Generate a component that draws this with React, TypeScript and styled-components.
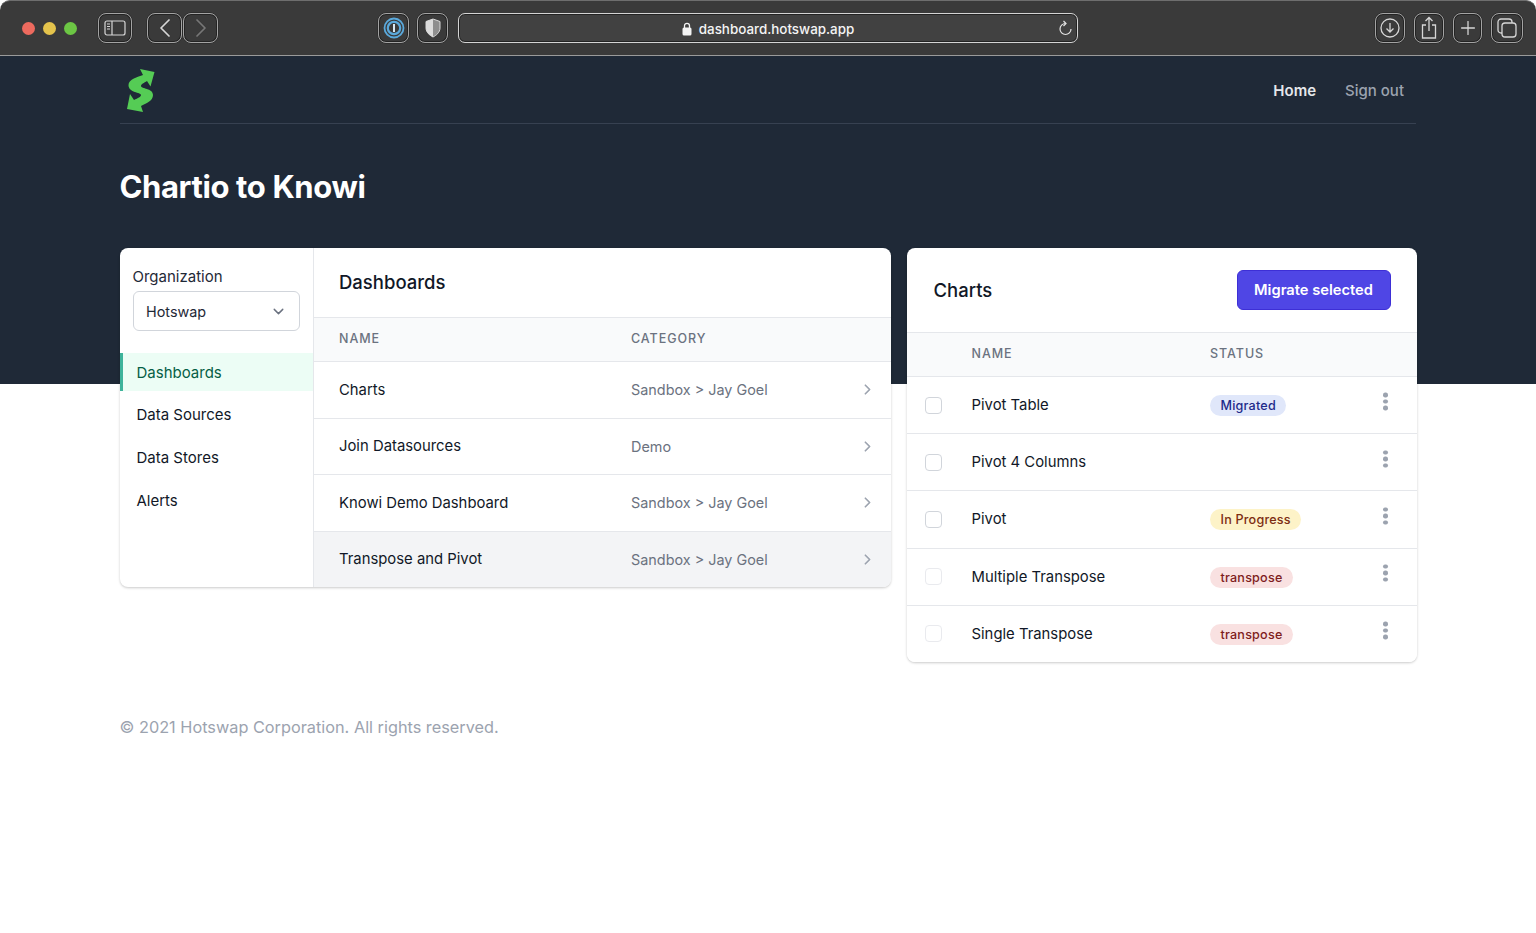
import { ChevronDown, ChevronLeft, ChevronRight, Plus } from "lucide-react";
import styled, { createGlobalStyle } from "styled-components";

const dashboards = [
  { name: "Charts", category: "Sandbox > Jay Goel" },
  { name: "Join Datasources", category: "Demo" },
  { name: "Knowi Demo Dashboard", category: "Sandbox > Jay Goel" },
  { name: "Transpose and Pivot", category: "Sandbox > Jay Goel", active: true },
];

type Tone = "blue" | "yellow" | "red";

const charts: { name: string; status?: string; tone?: Tone; faded?: boolean }[] = [
  { name: "Pivot Table", status: "Migrated", tone: "blue" },
  { name: "Pivot 4 Columns" },
  { name: "Pivot", status: "In Progress", tone: "yellow" },
  { name: "Multiple Transpose", status: "transpose", tone: "red", faded: true },
  { name: "Single Transpose", status: "transpose", tone: "red", faded: true },
];

const navItems = ["Dashboards", "Data Sources", "Data Stores", "Alerts"];

const toneColors: Record<Tone, { bg: string; fg: string }> = {
  blue: { bg: "#e0e7fa", fg: "#1e2a8a" },
  yellow: { bg: "#fdf3c8", fg: "#7c2d12" },
  red: { bg: "#f9e1e1", fg: "#7f1d1d" },
};

const GlobalStyle = createGlobalStyle`
  html, body {
    margin: 0;
    background: #fff;
    font-family: Inter, "Liberation Sans", sans-serif;
    color: #111827;
  }
  * { box-sizing: border-box; }
`;

const Toolbar = styled.div`
  height: 56px;
  background: #3a3a3a;
  border-radius: 10px 10px 0 0;
  border-top: 1px solid #6e6e6e;
  border-bottom: 1px solid #9a9a9a;
  display: flex;
  align-items: center;
  padding: 0 13px 0 22px;
`;

const Light = styled.span<{ $color: string }>`
  width: 13px;
  height: 13px;
  border-radius: 50%;
  background: ${(p) => p.$color};
  margin-right: 8px;
`;

const ToolButton = styled.div<{ $width: number; $left?: number }>`
  width: ${(p) => p.$width}px;
  height: 30px;
  margin-left: ${(p) => p.$left ?? 0}px;
  border: 1px solid #a3a3a3;
  border-radius: 8px;
  box-shadow: inset 0 0 0 1px #232323, 0 0 0 0.5px #232323;
  display: flex;
  align-items: center;
  justify-content: center;
  flex: none;
  color: #d6d6d6;
`;

const UrlBar = styled.div`
  width: 620px;
  height: 30px;
  margin-left: 10px;
  padding-top: 1px;
  flex: none;
  border: 1px solid #d4d4d4;
  border-radius: 7px;
  box-shadow: inset 0 0 0 1px #232323;
  background: #414141;
  display: flex;
  align-items: center;
  justify-content: center;
  gap: 7px;
  position: relative;
  color: #f4f4f4;
  font-size: 13.4px;
  font-weight: 500;
`;

const Reload = styled.span`
  position: absolute;
  right: 4px;
  top: 6px;
  display: flex;
  color: #e4e4e4;
`;

const Hero = styled.header`
  height: 328px;
  background: #1f2937;
  padding: 0 120px;
`;

const TopNav = styled.nav`
  height: 68px;
  border-bottom: 1px solid #374151;
  display: flex;
  align-items: center;
  justify-content: space-between;
  padding: 0 12px 0 6px;
`;

const NavLinks = styled.div`
  display: flex;
  gap: 29px;
  padding-top: 2px;
`;

const NavLink = styled.a<{ $active?: boolean }>`
  font-size: 15px;
  font-weight: ${(p) => (p.$active ? 600 : 500)};
  color: ${(p) => (p.$active ? "#e5e7eb" : "#9ca3af")};
`;

const Title = styled.h1`
  margin: 44px 0 0 -0.5px;
  font-size: 31px;
  line-height: 38px;
  font-weight: 700;
  letter-spacing: -0.37px;
  color: #fff;
`;

const Main = styled.main`
  margin-top: -136px;
  padding: 0 119px 0 119.5px;
  display: flex;
  gap: 16px;
  align-items: flex-start;
`;

const Card = styled.section<{ $width: number }>`
  width: ${(p) => p.$width}px;
  flex: none;
  background: #fff;
  border-radius: 8px;
  overflow: hidden;
  box-shadow: 0 1px 3px rgba(0, 0, 0, 0.14), 0 1px 2px rgba(0, 0, 0, 0.08);
`;

const Split = styled.div`
  display: flex;
`;

const Sidebar = styled.aside`
  width: 194px;
  flex: none;
  border-right: 1px solid #e5e7eb;
  padding-top: 18.5px;
`;

const FieldLabel = styled.label`
  display: block;
  padding-left: 13px;
  font-size: 15px;
  line-height: 20px;
  color: #1f2937;
`;

const Select = styled.div`
  margin: 4.5px 13px 22px;
  height: 40px;
  border: 1px solid #d1d5db;
  border-radius: 6px;
  padding: 0 12px 0 12.5px;
  display: flex;
  align-items: center;
  justify-content: space-between;
  font-size: 14.4px;
  color: #1f2937;
`;

const SideNav = styled.ul`
  list-style: none;
  margin: 0;
  padding: 0 0 68px;
  display: flex;
  flex-direction: column;
  gap: 4.7px;
`;

const SideItem = styled.li<{ $active?: boolean }>`
  height: 38px;
  display: flex;
  align-items: center;
  padding-left: 14px;
  font-size: 15px;
  color: ${(p) => (p.$active ? "#065f46" : "#111827")};
  background: ${(p) => (p.$active ? "#ecfdf5" : "transparent")};
  border-left: 3.5px solid ${(p) => (p.$active ? "#3eb39b" : "transparent")};
`;

const Content = styled.div`
  flex: 1;
  min-width: 0;
`;

const PanelHead = styled.div<{ $height: number; $left: number; $nudge?: number }>`
  height: ${(p) => p.$height}px;
  padding: 0 26px ${(p) => p.$nudge ?? 0}px ${(p) => p.$left}px;
  display: flex;
  align-items: center;
  justify-content: space-between;
`;

const PanelTitle = styled.h2`
  margin: 0;
  font-size: 18.5px;
  font-weight: 500;
  color: #111827;
`;

const DashGrid = styled.div<{ $active?: boolean; $head?: boolean }>`
  display: grid;
  grid-template-columns: 292px 1fr 24px;
  align-items: center;
  padding: 0 12px ${(p) => (p.$head ? 1.5 : 0)}px 25.5px;
  height: ${(p) => (p.$head ? 44 : 56.5)}px;
  border-top: 1px solid #e5e7eb;
  background: ${(p) => (p.$active ? "#f3f4f6" : p.$head ? "#f9fafb" : "#fff")};
`;

const ChartGrid = styled.div<{ $head?: boolean }>`
  display: grid;
  grid-template-columns: 64.5px 238.5px 1fr 24px;
  align-items: center;
  padding: 0 19.5px ${(p) => (p.$head ? 2 : 0)}px 0;
  height: ${(p) => (p.$head ? 44 : 57.2)}px;
  border-top: 1px solid #e5e7eb;
  background: ${(p) => (p.$head ? "#f9fafb" : "#fff")};
`;

const ColHead = styled.span`
  font-size: 12.5px;
  font-weight: 500;
  letter-spacing: 0.95px;
  text-transform: uppercase;
  color: #6b7280;
`;

const Name = styled.span`
  font-size: 14.85px;
  font-weight: 400;
  color: #111827;
`;

const Category = styled.span`
  font-size: 14.4px;
  color: #6b7280;
`;

const RowChevron = styled.span`
  display: flex;
  justify-content: center;
  color: #9ca3af;
`;

const CheckCell = styled.span`
  display: flex;
  justify-content: flex-end;
  padding-right: 30px;
`;

const CheckBox = styled.span<{ $faded?: boolean }>`
  width: 17px;
  height: 17px;
  border-radius: 4px;
  border: 1px solid ${(p) => (p.$faded ? "#e9eaee" : "#d1d5db")};
  background: #fff;
`;

const Badge = styled.span<{ $tone: Tone }>`
  display: inline-flex;
  align-items: center;
  height: 21px;
  padding: 0 10.5px;
  border-radius: 11px;
  font-size: 12.6px;
  font-weight: 500;
  letter-spacing: 0.2px;
  background: ${(p) => toneColors[p.$tone].bg};
  color: ${(p) => toneColors[p.$tone].fg};
`;

const Kebab = styled.span`
  display: flex;
  flex-direction: column;
  align-items: center;
  gap: 2px;
  transform: translateY(-3.5px);
  i {
    width: 4.5px;
    height: 4.5px;
    border-radius: 50%;
    background: #9ca3af;
  }
`;

const PrimaryButton = styled.button`
  width: 154px;
  height: 40px;
  padding: 0 6px 0 5px;
  border: 1px solid #3d2fd6;
  border-radius: 6px;
  background: #4f46e5;
  color: #fff;
  font-family: inherit;
  font-size: 14.7px;
  font-weight: 600;
`;

const Footer = styled.footer`
  margin-top: 53px;
  padding-left: 119.5px;
  font-size: 16.3px;
  line-height: 24px;
  color: #9ca3af;
`;

const Logo = () => (
  <svg width="30" height="46" viewBox="126 66 30 46">
    <path
      d="M140 68 L154.5 71 L150.5 85.5 L147 80 C144 82 141 83 141 85 C141 88 153 87 153 94 C153 100 146 102.5 141 105 L143 111 L127 108 L130 93 L134 99 C138 97 141 96 141 94 C141 91 128.5 92 128.5 84 C128.5 78 138 76 143 74 Z"
      fill="#55cc55"
    />
  </svg>
);

const SidebarIcon = () => (
  <svg width="22" height="18" viewBox="0 0 22 18" fill="none" stroke="currentColor" strokeWidth="1.2">
    <rect x="1" y="2" width="20" height="14" rx="2" />
    <path d="M8 2v14M3 5h3M3 7.5h3M3 10h3" />
  </svg>
);

const OnePassword = () => (
  <svg width="22" height="22" viewBox="0 0 22 22" fill="none">
    <circle cx="11" cy="11" r="9.5" stroke="#5aa9dc" strokeWidth="1.8" />
    <circle cx="11" cy="11" r="6.2" stroke="#5aa9dc" strokeWidth="2.2" />
    <path d="M11 7v8" stroke="#d9e9f4" strokeWidth="2" />
  </svg>
);

const Shield = () => (
  <svg width="16" height="20" viewBox="0 0 16 20">
    <path d="M8 1 L15 3.5 V10 C15 14.5 11 17.5 8 19 C5 17.5 1 14.5 1 10 V3.5 Z" fill="#8e8e8e" stroke="#d8d8d8" />
    <path d="M8 1 L1 3.5 V10 C1 14.5 5 17.5 8 19 Z" fill="#dcdcdc" />
  </svg>
);

const LockIcon = () => (
  <svg width="10" height="14" viewBox="0 0 10 14">
    <path d="M2.5 6V3.8a2.5 2.5 0 0 1 5 0V6" fill="none" stroke="#f4f4f4" strokeWidth="1.3" />
    <rect x="0.5" y="5.5" width="9" height="8" rx="1.5" fill="#f4f4f4" />
  </svg>
);

const ReloadIcon = () => (
  <svg width="15" height="16" viewBox="0 0 15 16" fill="none" stroke="currentColor" strokeWidth="1.2">
    <path d="M7.5 3.5A5.5 5.5 0 1 0 13 9" />
    <path d="M5.5 1 8 3.5 5.5 6" />
  </svg>
);

const DownloadIcon = () => (
  <svg width="22" height="22" viewBox="0 0 22 22" fill="none" stroke="currentColor" strokeWidth="1.3">
    <circle cx="11" cy="11" r="9" />
    <path d="M11 6v9M7.5 11.5 11 15l3.5-3.5" />
  </svg>
);

const ShareIcon = () => (
  <svg width="18" height="24" viewBox="0 0 18 24" fill="none" stroke="currentColor" strokeWidth="1.3">
    <path d="M6 9H2.5v13h13V9H12M9 15V2M5.5 5 9 1.5 12.5 5" />
  </svg>
);

const TabsIcon = () => (
  <svg width="22" height="22" viewBox="0 0 22 22" fill="none" stroke="currentColor" strokeWidth="1.3">
    <rect x="6" y="6" width="14" height="14" rx="3" />
    <path d="M6 16H5a3 3 0 0 1-3-3V5a3 3 0 0 1 3-3h8a3 3 0 0 1 3 3v1" />
  </svg>
);

const App = () => {
  return (
    <>
      <GlobalStyle />
      <Toolbar>
        <Light $color="#ed6a5e" />
        <Light $color="#e4c34c" />
        <Light $color="#6cc644" />
        <ToolButton $width={34} $left={13}>
          <SidebarIcon />
        </ToolButton>
        <ToolButton $width={35} $left={15}>
          <ChevronLeft size={32} strokeWidth={1.3} />
        </ToolButton>
        <ToolButton $width={35} $left={1}>
          <ChevronRight size={32} strokeWidth={1.3} color="#777" />
        </ToolButton>
        <ToolButton $width={31} $left={160}>
          <OnePassword />
        </ToolButton>
        <ToolButton $width={31} $left={8}>
          <Shield />
        </ToolButton>
        <UrlBar>
          <LockIcon />
          dashboard.hotswap.app
          <Reload>
            <ReloadIcon />
          </Reload>
        </UrlBar>
        <ToolButton $width={30} $left={297}>
          <DownloadIcon />
        </ToolButton>
        <ToolButton $width={30} $left={9}>
          <ShareIcon />
        </ToolButton>
        <ToolButton $width={29} $left={9}>
          <Plus size={22} strokeWidth={1.4} />
        </ToolButton>
        <ToolButton $width={32} $left={9}>
          <TabsIcon />
        </ToolButton>
      </Toolbar>

      <Hero>
        <TopNav>
          <Logo />
          <NavLinks>
            <NavLink $active>Home</NavLink>
            <NavLink>Sign out</NavLink>
          </NavLinks>
        </TopNav>
        <Title>Chartio to Knowi</Title>
      </Hero>

      <Main>
        <Card $width={771.5}>
          <Split>
            <Sidebar>
              <FieldLabel>Organization</FieldLabel>
              <Select>
                Hotswap
                <ChevronDown size={17} color="#6b7280" />
              </Select>
              <SideNav>
                {navItems.map((item, idx) => (
                  <SideItem key={item} $active={idx === 0}>
                    {item}
                  </SideItem>
                ))}
              </SideNav>
            </Sidebar>
            <Content>
              <PanelHead $height={69} $left={25.5} $nudge={2}>
                <PanelTitle>Dashboards</PanelTitle>
              </PanelHead>
              <DashGrid $head>
                <ColHead>Name</ColHead>
                <ColHead>Category</ColHead>
              </DashGrid>
              {dashboards.map((row) => (
                <DashGrid key={row.name} $active={row.active}>
                  <Name>{row.name}</Name>
                  <Category>{row.category}</Category>
                  <RowChevron>
                    <ChevronRight size={17} strokeWidth={2.4} />
                  </RowChevron>
                </DashGrid>
              ))}
            </Content>
          </Split>
        </Card>

        <Card $width={510}>
          <PanelHead $height={84} $left={26.5}>
            <PanelTitle>Charts</PanelTitle>
            <PrimaryButton>Migrate selected</PrimaryButton>
          </PanelHead>
          <ChartGrid $head>
            <span />
            <ColHead>Name</ColHead>
            <ColHead>Status</ColHead>
          </ChartGrid>
          {charts.map((row) => (
            <ChartGrid key={row.name}>
              <CheckCell>
                <CheckBox $faded={row.faded} />
              </CheckCell>
              <Name>{row.name}</Name>
              <span>{row.status && row.tone && <Badge $tone={row.tone}>{row.status}</Badge>}</span>
              <Kebab>
                <i />
                <i />
                <i />
              </Kebab>
            </ChartGrid>
          ))}
        </Card>
      </Main>

      <Footer>© 2021 Hotswap Corporation. All rights reserved.</Footer>
    </>
  );
};

export default App;
